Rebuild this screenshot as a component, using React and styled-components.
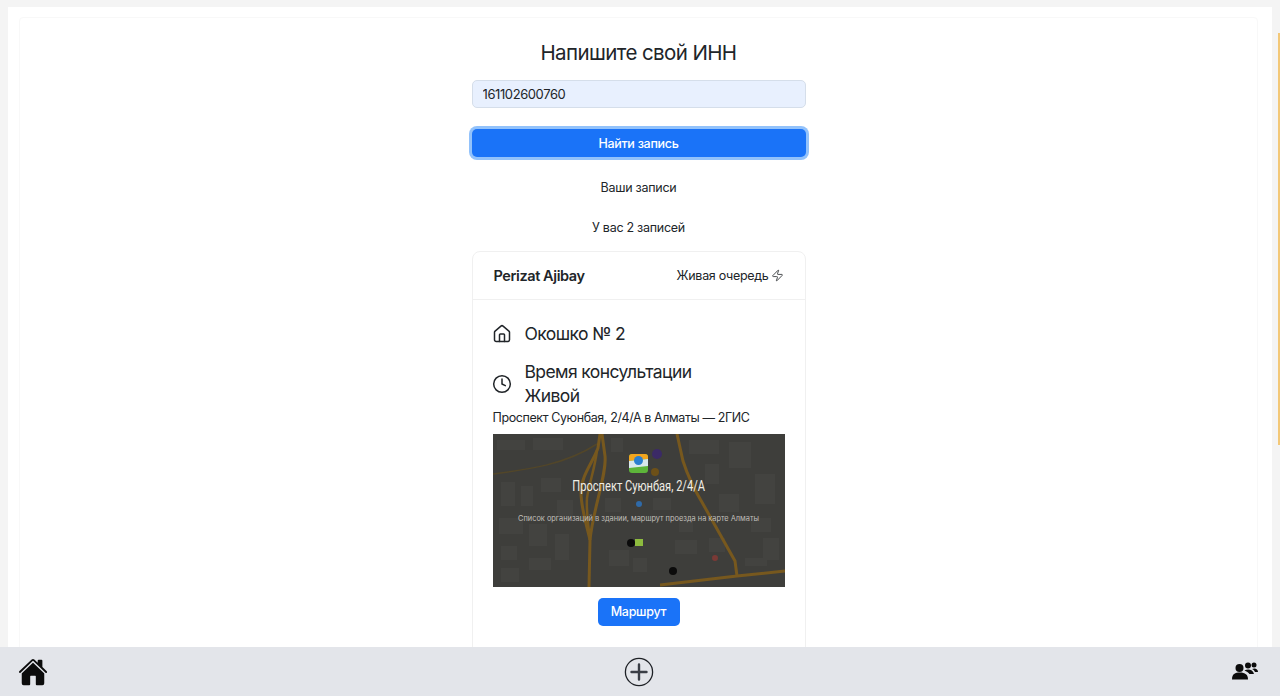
import React from 'react';
import styled, { createGlobalStyle } from 'styled-components';
import { IoHome } from 'react-icons/io5';
import { House, Clock, Zap } from 'lucide-react';

const GlobalStyle = createGlobalStyle`
  html, body {
    margin: 0;
    height: 100%;
    overflow: hidden;
    background: #f4f4f4;
    font-family: Inter, "Noto Sans", sans-serif;
    color: #212529;
  }
`;

const Page = styled.div`
  box-sizing: border-box;
  height: 696px;
  padding: 7px 8px 0;
  overflow: hidden;
`;

const Panel = styled.div`
  background: #fff;
  padding: 10px 14px 0 11px;
  height: 100%;
  box-sizing: border-box;
`;

const Inner = styled.div`
  border: 1px solid #f8f8f8;
  border-radius: 4px;
  height: 100%;
  box-sizing: border-box;
  display: flex;
  flex-direction: column;
  align-items: center;
  padding-top: 20px;
`;

const Title = styled.h2`
  margin: 0;
  font-size: 20.5px;
  font-weight: 400;
  line-height: 30px;
  letter-spacing: -0.6px;
  color: #212529;
`;

const Column = styled.div`
  width: 334px;
  display: flex;
  flex-direction: column;
  margin-top: 12px;
`;

const Input = styled.input`
  box-sizing: border-box;
  height: 28px;
  width: 100%;
  border: 1px solid #d5deea;
  border-radius: 5px;
  background: #e8f0fe;
  font: 13px Inter, sans-serif;
  letter-spacing: -0.4px;
  color: #212529;
  padding: 0 10px;
  outline: none;
`;

const PrimaryButton = styled.button`
  box-sizing: border-box;
  border: none;
  border-radius: 5px;
  background: #1a73f8;
  color: #fff;
  font: 450 12.5px Inter, sans-serif;
  letter-spacing: -0.3px;
  height: 28px;
  width: ${p => p.$small ? '82px' : '100%'};
  margin-top: ${p => p.$small ? '11px' : '21px'};
  box-shadow: ${p => p.$focus ? '0 0 0 3px #92c2fb' : 'none'};
  align-self: center;
`;

const Note = styled.p`
  margin: ${p => p.$top}px 0 0;
  text-align: center;
  font-size: 12.5px;
  line-height: 20px;
  letter-spacing: -0.27px;
`;

const Card = styled.div`
  border: 1px solid #f0f0f0;
  border-radius: 8px;
  margin-top: 13px;
  height: 460px;
  box-sizing: border-box;
`;

const CardHeader = styled.div`
  display: flex;
  justify-content: space-between;
  align-items: center;
  height: 48px;
  padding: 0 21px;
  box-sizing: border-box;
  border-bottom: 1px solid #f0f0f0;
`;

const Name = styled.span`
  font-size: 14.5px;
  font-weight: 600;
  letter-spacing: -0.4px;
`;

const Queue = styled.span`
  display: flex;
  align-items: center;
  gap: 2px;
  font-size: 12.5px;
  letter-spacing: -0.3px;
  svg { width: 13px; height: 13px; }
`;

const CardBody = styled.div`
  padding: 22px 20px 0;
  display: flex;
  flex-direction: column;
`;

const InfoRow = styled.div`
  display: flex;
  align-items: center;
  gap: 13px;
  font-size: 17.5px;
  line-height: 24.5px;
  letter-spacing: -0.6px;
  margin-bottom: ${p => p.$gap || 0}px;
  svg { width: 20px; height: 20px; flex: none; margin-left: -1px; }
`;

const Address = styled.div`
  font-size: 12.5px;
  line-height: 18px;
  letter-spacing: -0.4px;
  margin-bottom: 7px;
`;

const MapPreview = styled.div`
  position: relative;
  height: 153px;
  background: #3e3e3b;
  overflow: hidden;
  color: #fff;
`;

const MapCaption = styled.div`
  position: absolute;
  inset: 0;
  display: flex;
  flex-direction: column;
  align-items: center;
`;

const MapTitle = styled.div`
  margin-top: 42px;
  font-family: "Roboto", sans-serif;
  font-size: 15px;
  line-height: 20px;
  transform: scaleX(0.74);
  color: #f1eee6;
  white-space: nowrap;
`;

const MapSub = styled.div`
  margin-top: 18px;
  font-size: 7.4px;
  line-height: 10px;
  color: #c0bfba;
  white-space: nowrap;
`;

const BottomBar = styled.nav`
  position: fixed;
  left: 0;
  right: 0;
  bottom: 0;
  height: 49px;
  background: #e3e5ea;
  display: grid;
  grid-template-columns: 1fr auto 1fr;
  align-items: center;
  padding: 0 22px 0 20px;
  color: #0c0c0c;
`;

const HomeIcon = styled(IoHome)`
  margin-left: -2px;
  width: 30px;
  height: 30px;
`;

const BarEnd = styled.div`
  justify-self: end;
  display: flex;
`;

const PlusSvg = styled.svg`
  display: block;
`;

const ScrollMark = styled.div`
  position: fixed;
  right: 0;
  top: 33px;
  width: 2px;
  height: 412px;
  background: #f3c878;
`;

const Road = styled.path`
  fill: none;
  stroke: #77581e;
  stroke-width: ${p => p.$w || 3};
`;

const FaintRoad = styled.path`
  fill: none;
  stroke: #524629;
  stroke-width: 1.5;
`;

const Block = styled.rect`
  fill: #434340;
`;

// building blocks behind the roads, faint in the dimmed map
const blocks = [
  [4, 6, 28, 10], [40, 4, 30, 12], [8, 48, 14, 24], [28, 52, 12, 20], [48, 44, 20, 14],
  [6, 84, 24, 16], [36, 90, 18, 22], [8, 112, 16, 14], [36, 124, 22, 12], [62, 100, 14, 26],
  [64, 66, 16, 16], [8, 134, 18, 14], [116, 116, 20, 16], [118, 4, 12, 14], [196, 6, 30, 14],
  [236, 8, 22, 26], [262, 40, 20, 30], [226, 60, 20, 18], [212, 30, 14, 20], [160, 64, 18, 12],
  [186, 84, 14, 14], [258, 84, 20, 14], [182, 106, 22, 14], [270, 104, 16, 22], [216, 104, 16, 14],
  [252, 124, 22, 8], [112, 64, 16, 14], [140, 124, 14, 14],
];

function MapDrawing() {
  return (
    <svg viewBox="0 0 292 153" width="292" height="153" style={{ position: 'absolute', inset: 0 }}>
      {blocks.map(([x, y, w, h]) => <Block key={`${x}-${y}`} x={x} y={y} width={w} height={h} />)}
      <FaintRoad d="M0 40 C30 36 70 32 104 10" />
      <Road $w="3" d="M107 0 L105 14 C100 28 88 42 88 58 C88 75 94 92 97 106" />
      <Road $w="3" d="M109 0 L112 22 C114 40 100 75 97 106 L96 153" />
      <Road $w="2.5" d="M104 16 C102 34 96 50 94 64 C93 80 96 95 97 106" />
      <Road $w="3" d="M184 0 L190 27 C196 46 204 60 210 70 L242 127 L244 142" />
      <Road $w="3" d="M167 151 L244 142 L292 137" />
      <circle cx="164" cy="20" r="5" fill="#3b2a66" />
      <circle cx="162" cy="38" r="4" fill="#6d5018" />
      <circle cx="146" cy="70" r="3" fill="#2f6aa8" />
      <circle cx="138" cy="109" r="4" fill="#0b0b0b" />
      <rect x="142" y="105" width="8" height="7" fill="#8dbb3e" />
      <circle cx="180" cy="137" r="4" fill="#0b0b0b" />
      <circle cx="222" cy="124" r="3" fill="#7a3a36" />
      <rect x="136" y="20" width="19" height="19" rx="3" fill="#5db53a" />
      <path d="M136 27 V23 a3 3 0 0 1 3 -3 H152 a3 3 0 0 1 3 3 V25 Z" fill="#f2a51e" />
      <path d="M136 27 L155 25 V32 L136 34 Z" fill="#d9e7ec" />
      <circle cx="145.5" cy="26.5" r="4.5" fill="#2b7fd0" />
    </svg>
  );
}

function PlusIcon() {
  return (
    <PlusSvg width="30" height="30" viewBox="0 0 30 30" fill="none">
      <circle cx="15" cy="15" r="13.6" stroke="#1e2126" strokeWidth="1.3" />
      <path d="M15 7.5 V22.5 M7.5 15 H22.5" stroke="#3a3e46" strokeWidth="2.4" strokeLinecap="round" />
    </PlusSvg>
  );
}

function PeopleIcon() {
  return (
    <svg width="26" height="19" viewBox="0 0 26 19" fill="#0c0c0c">
      <circle cx="7.5" cy="6" r="4" />
      <path d="M0 17.5 C0 12 3 10.5 8 10.5 C13 10.5 16 12.5 16 17.5 Z" />
      <circle cx="16" cy="3.5" r="3" />
      <path d="M12.5 8.5 C16 6.5 21 7.5 22 12 L17.5 12 C16.5 10.5 14.5 9.5 12.5 8.5 Z" />
      <circle cx="22" cy="3" r="2.5" />
      <path d="M20 7 C23 5.5 26 7 26 10 L23 10 C22.5 9 21.5 7.5 20 7 Z" />
    </svg>
  );
}

export default function App() {
  return (
    <>
      <GlobalStyle />
      <Page>
        <Panel>
          <Inner>
            <Title>Напишите свой ИНН</Title>
            <Column>
              <Input defaultValue="161102600760" />
              <PrimaryButton $focus>Найти запись</PrimaryButton>
              <Note $top={21}>Ваши записи</Note>
              <Note $top={20}>У вас 2 записей</Note>
              <Card>
                <CardHeader>
                  <Name>Perizat Ajibay</Name>
                  <Queue>Живая очередь <Zap strokeWidth={1.5} /></Queue>
                </CardHeader>
                <CardBody>
                  <InfoRow $gap={13}><House strokeWidth={1.8} />Окошко № 2</InfoRow>
                  <InfoRow><Clock strokeWidth={1.8} /><div>Время консультации<br />Живой</div></InfoRow>
                  <Address>Проспект Суюнбая, 2/4/А в Алматы — 2ГИС</Address>
                  <MapPreview>
                    <MapDrawing />
                    <MapCaption>
                      <MapTitle>Проспект Суюнбая, 2/4/А</MapTitle>
                      <MapSub>Список организаций в здании, маршрут проезда на карте Алматы</MapSub>
                    </MapCaption>
                  </MapPreview>
                  <PrimaryButton $small>Маршрут</PrimaryButton>
                </CardBody>
              </Card>
            </Column>
          </Inner>
        </Panel>
      </Page>
      <ScrollMark />
      <BottomBar>
        <HomeIcon />
        <PlusIcon />
        <BarEnd><PeopleIcon /></BarEnd>
      </BottomBar>
    </>
  );
}
